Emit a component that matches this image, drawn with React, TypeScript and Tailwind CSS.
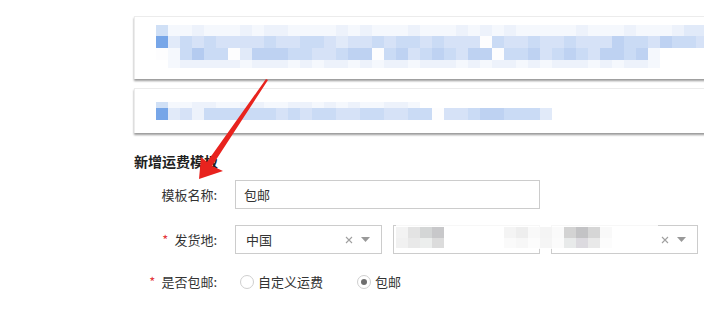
const palette: Record<string, string> = {
  ' ': 'transparent',
  '0': '#fdfdfe',
  '1': '#f5f8fd',
  '2': '#edf2fb',
  '3': '#e1eaf9',
  '4': '#d6e2f7',
  '5': '#cadbf5',
  '6': '#bed2f2',
  '7': '#b4cbf0',
  '8': '#77a6e8',
  '9': '#d0e0f6',
};

type MosaicRow = { h: number; cells: string };

// pixelated (blurred) screenshot bits
const card1Rows: MosaicRow[] = [
  { h: 11, cells: '9112111212' + '2111121211' + '1211121212' + '1111121112' + '111233' },
  { h: 12, cells: '8354544445' + '4455434454' + '5545444054' + '4544544465' + '546554' },
  { h: 12, cells: '0157550366' + '6554456605' + '6456546605' + '5645654665' + '61' },
  { h: 8, cells: ' 122222122' + '2121221212' + '2122212122' + '1212221212' + '21' },
];

const card2Rows: MosaicRow[] = [
  { h: 6, cells: '9112211221' + '1221212112' + '21' },
  { h: 12, cells: '8342555555' + '4545544554' + '4550445665' + '553' },
];

const overlayCols: [string, string][] = [
  ['#f3f3f3', '#f1f1f1'],
  ['#e3e3e3', '#e9e9e9'],
  ['#d4d6d6', '#eceeed'],
  ['#c8c8ca', '#dcdcdc'],
  ['#ffffff', '#ffffff'],
  ['#ffffff', '#ffffff'],
  ['#ffffff', '#ffffff'],
  ['#ffffff', '#ffffff'],
  ['#ffffff', '#ffffff'],
  ['#f4f4f4', '#fafafa'],
  ['#eeeeee', '#f7f7f7'],
  ['#f9f9f9', '#fcfcfc'],
  ['#f4f4f4', '#f5f5f5'],
  ['#fafafa', '#fbfbfb'],
  ['#d3d3d3', '#e8eaea'],
  ['#c3c3c5', '#dcdadf'],
  ['#d6d6d6', '#e9e9e9'],
  ['#f9f9f9', '#fcfcfc'],
];

const Mosaic = ({ rows }: { rows: MosaicRow[] }) => (
  <div className="flex flex-col">
    {rows.map((row, i) => (
      <div key={i} className="flex">
        {row.cells.split('').map((c, j) => (
          <div
            key={j}
            className="w-[12px] shrink-0"
            style={{ height: row.h, backgroundColor: palette[c] }}
          />
        ))}
      </div>
    ))}
  </div>
);

const ClearIcon = () => (
  <svg width="8" height="8" viewBox="0 0 8 8" className="shrink-0">
    <path d="M1 1L7 7M7 1L1 7" stroke="#a0a0a0" strokeWidth="1.1" />
  </svg>
);

const CaretIcon = () => (
  <svg width="9" height="5" viewBox="0 0 9 5" className="shrink-0">
    <path d="M0 0H9L4.5 5Z" fill="#999" />
  </svg>
);

const Select = ({ value, clearable = true }: { value?: string; clearable?: boolean }) => (
  <div className="w-[147px] h-[29px] border border-[#cccccc] flex items-center pl-[10px] pr-[11px] bg-white">
    <span className="flex-1 text-[13px] text-[#333]">{value}</span>
    {clearable && (
      <div className="flex items-center gap-[8px]">
        <ClearIcon />
        <CaretIcon />
      </div>
    )}
  </div>
);

const Label = ({ text, required = false }: { text: string; required?: boolean }) => (
  <div className="w-[83px] mr-[18px] flex justify-end items-center text-[13px] text-[#333]">
    {required && <span className="text-[#e4393c] mr-[6px]">*</span>}
    <span>{text}</span>
  </div>
);

const Radio = ({ label, checked = false }: { label: string; checked?: boolean }) => (
  <label className="flex items-center gap-[4px] text-[13px] text-[#333]">
    <span className="w-[14px] h-[14px] rounded-full border border-[#cfcfcf] flex items-center justify-center bg-white">
      {checked && <span className="w-[6px] h-[6px] rounded-full bg-[#6e6e6e]" />}
    </span>
    <span>{label}</span>
  </label>
);

export default function App() {
  return (
    <div className="relative w-[704px] h-[316px] overflow-hidden bg-white font-['Noto_Sans_CJK_SC','Noto_Sans',sans-serif]">
      <div className="pl-[134px] pt-[16px]">
        <div className="w-[620px] h-[63px] border-l border-t border-[#ececec] bg-white shadow-[0_2px_2px_rgba(0,0,0,0.4)] pl-[21px] pt-[8px] overflow-hidden">
          <Mosaic rows={card1Rows} />
        </div>
        <div className="mt-[9px] w-[620px] h-[45px] border-l border-t border-[#ececec] bg-white shadow-[0_2px_2px_rgba(0,0,0,0.4)] pl-[21px] pt-[13px] overflow-hidden">
          <Mosaic rows={card2Rows} />
        </div>

        <h3 className="mt-[18px] text-[14px] leading-[20px] font-bold text-[#222]">新增运费模板</h3>

        <div className="mt-[9px] flex items-center">
          <Label text="模板名称:" />
          <div className="w-[305px] h-[29px] border border-[#cccccc] flex items-center px-[8px] text-[13px] text-[#333]">
            包邮
          </div>
        </div>

        <div className="mt-[16px] flex items-center">
          <Label text="发货地:" required />
          <div className="flex gap-[11px]">
            <Select value="中国" />
            <Select clearable={false} />
            <Select />
          </div>
        </div>

        <div className="mt-[18px] h-[20px] flex items-center">
          <Label text="是否包邮:" required />
          <div className="ml-[5px] flex items-center gap-[34px]">
            <Radio label="自定义运费" />
            <Radio label="包邮" checked />
          </div>
        </div>
      </div>

      {/* blurred region over the 2nd/3rd select */}
      <div className="absolute left-[396px] top-[225px] w-[262px] h-[24px] bg-white/85 pt-[2px] flex">
        {overlayCols.map((c, i) => (
          <div key={i} className="w-[12px] shrink-0 flex flex-col">
            <div className="h-[11px]" style={{ backgroundColor: c[0] }} />
            <div className="h-[10px]" style={{ backgroundColor: c[1] }} />
          </div>
        ))}
      </div>

      {/* red annotation arrow */}
      <svg className="absolute left-0 top-0 pointer-events-none" width="704" height="316" viewBox="0 0 704 316">
        <polygon
          points="199,179 201,157 207,162 266,79 268,80 212,166 223,171"
          fill="#e8231e"
        />
      </svg>
    </div>
  );
}
